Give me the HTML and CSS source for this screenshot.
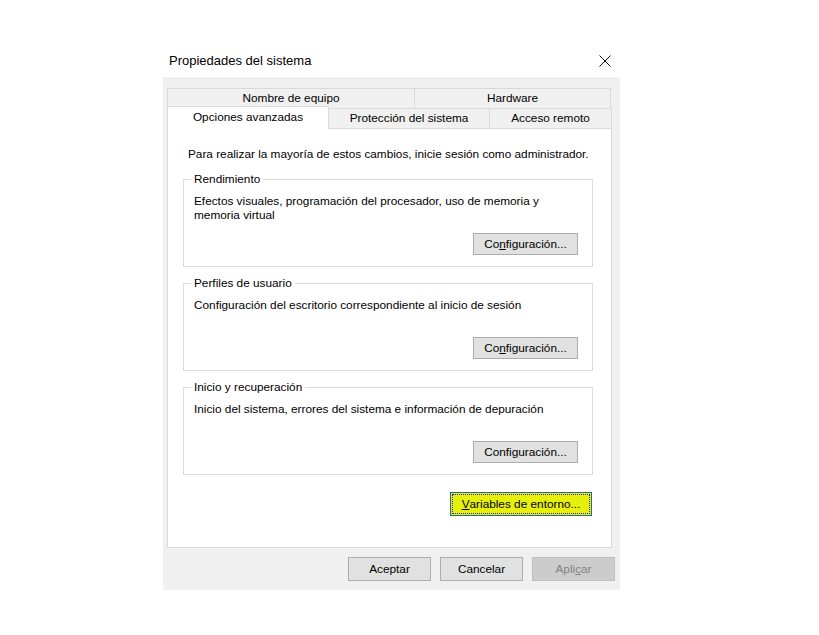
FILE: index.html
```html
<!DOCTYPE html>
<html lang="es">
<head>
  <meta charset="UTF-8">
  <title>Propiedades del sistema</title>
  <link rel="stylesheet" href="styles.css">
</head>
<body>

  <div class="window">
    <!-- Title bar -->
    <div class="titlebar">
      <span class="title">Propiedades del sistema</span>
      <svg class="close" width="12" height="12" viewBox="0 0 12 12">
        <path d="M0.5 0.5 L11.5 11.5 M11.5 0.5 L0.5 11.5" stroke="#111" stroke-width="1" fill="none"/>
      </svg>
    </div>

    <div class="client">
      <!-- Tabs -->
      <div class="tabs">
        <div class="tab-row">
          <div class="tab tab-name">Nombre de equipo</div>
          <div class="tab tab-hw">Hardware</div>
        </div>
        <div class="tab-row">
          <div class="tab tab-adv active">Opciones avanzadas</div>
          <div class="tab tab-prot">Protección del sistema</div>
          <div class="tab tab-remote">Acceso remoto</div>
        </div>
      </div>

      <!-- Tab page -->
      <div class="panel">
        <p class="intro">Para realizar la mayoría de estos cambios, inicie sesión como administrador.</p>

        <div class="group">
          <div class="group-title">Rendimiento</div>
          <p class="group-text">Efectos visuales, programación del procesador, uso de memoria y memoria virtual</p>
          <div class="group-actions">
            <button class="btn btn-config">Co<u>n</u>figuración...</button>
          </div>
        </div>

        <div class="group">
          <div class="group-title">Perfiles de usuario</div>
          <p class="group-text">Configuración del escritorio correspondiente al inicio de sesión</p>
          <div class="group-actions">
            <button class="btn btn-config">Co<u>n</u>figuración...</button>
          </div>
        </div>

        <div class="group">
          <div class="group-title">Inicio y recuperación</div>
          <p class="group-text">Inicio del sistema, errores del sistema e información de depuración</p>
          <div class="group-actions">
            <button class="btn btn-config">Confi<u>g</u>uración...</button>
          </div>
        </div>

        <div class="env-row">
          <button class="btn btn-env"><span class="focus"><u>V</u>ariables de entorno...</span></button>
        </div>
      </div>

      <!-- Dialog buttons -->
      <div class="actions">
        <button class="btn btn-dialog">Aceptar</button>
        <button class="btn btn-dialog">Cancelar</button>
        <button class="btn btn-dialog" disabled>Apli<u>c</u>ar</button>
      </div>
    </div>
  </div>

</body>
</html>
```

FILE: styles.css
```css
/* Base */
body {
  margin: 0;
  background-color: #fff;
  font-family: 'Liberation Sans', Arial, sans-serif;
  font-size: 11.8px;
  color: #000;
}

p {
  margin: 0;
}

.window {
  width: 457px;
  margin: 40px 0 0 163px;
}

/* Title bar */
.titlebar {
  height: 37px;
  display: flex;
  align-items: center;
  justify-content: space-between;
  padding: 4px 9px 0 6px;
  box-sizing: border-box;
}

.title {
  font-size: 13px;
  color: #000;
}

.close {
  display: block;
}

/* Client area */
.client {
  background-color: #f0f0f0;
  padding: 11px 5px 9px 4px;
}

.tab-row {
  display: flex;
  height: 20px;
}

.tab {
  height: 20px;
  box-sizing: border-box;
  border: 1px solid #d9d9d9;
  border-bottom: none;
  margin-right: -1px;
  background-color: #f0f0f0;
  text-align: center;
  line-height: 19px;
}

.tab-name { width: 248px; }
.tab-hw { width: 197px; }
.tab-adv { width: 162px; }
.tab-prot { width: 162px; }
.tab-remote { width: 123px; }

.tab.active {
  position: relative;
  z-index: 1;
  background-color: #fff;
  height: 23px;
  margin-top: -2px;
  line-height: 20px;
}

/* Tab page */
.panel {
  height: 420px;
  box-sizing: border-box;
  margin-right: 3px;
  background-color: #fff;
  border: 1px solid #d9d9d9;
  padding: 18px 18px 0 15px;
}

.intro {
  line-height: 15px;
  margin-left: 5px;
  padding-bottom: 1px;
  white-space: nowrap;
}

.group {
  border: 1px solid #dcdcdc;
  padding: 0 14px 11px 10px;
  margin-top: 16px;
}

.group-title {
  width: fit-content;
  margin: -8px 0 0 -3px;
  padding: 0 3px;
  background-color: #fff;
  line-height: 15px;
}

.group-text {
  margin-top: 7px;
  min-height: 28px;
  line-height: 14px;
  padding-right: 20px;
}

.group-actions {
  display: flex;
  justify-content: flex-end;
  margin-top: 11px;
}

/* Buttons */
.btn {
  font-family: 'Liberation Sans', Arial, sans-serif;
  font-size: 11.8px;
  color: #000;
  background-color: #e1e1e1;
  border: 1px solid #adadad;
  padding: 0;
  box-sizing: border-box;
}

.btn u {
  text-underline-offset: 1px;
}

.btn-config {
  width: 105px;
  height: 22px;
}

.env-row {
  display: flex;
  justify-content: flex-end;
  margin-top: 17px;
  margin-right: 1px;
}

.btn-env {
  width: 142px;
  height: 24px;
  background-color: #e6f00c;
  border: 1px solid #1c64b4;
  padding: 1px;
}

.btn-env .focus {
  display: flex;
  align-items: center;
  justify-content: center;
  height: 100%;
  box-sizing: border-box;
  border: 1px dotted #333;
}

.actions {
  display: flex;
  justify-content: flex-end;
  gap: 9px;
  margin-top: 9px;
}

.btn-dialog {
  width: 83px;
  height: 24px;
}

.btn-dialog:disabled {
  background-color: #cccccc;
  border-color: #bfbfbf;
  color: #838383;
}
```
